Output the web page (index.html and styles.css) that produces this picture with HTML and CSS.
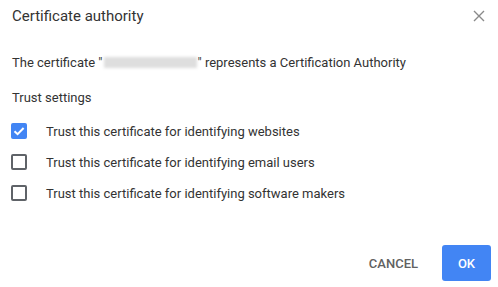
FILE: index.html
```html
<!DOCTYPE html>
<html lang="en">
<head>
    <meta charset="UTF-8">
    <title>Certificate authority</title>
    <link rel="stylesheet" href="styles.css">
</head>
<body>
    <div class="dialog">
        <div class="header">
            <h1 class="title">Certificate authority</h1>
            <button class="close-btn" aria-label="Close">
                <svg width="12" height="12" viewBox="0 0 12 12">
                    <path d="M1 1L11 11M11 1L1 11" stroke="#8a8a8a" stroke-width="1.4" fill="none"/>
                </svg>
            </button>
        </div>

        <p class="message">The certificate "<span class="hidden-name"></span>" represents a Certification Authority</p>

        <div class="section-title">Trust settings</div>

        <div class="options">
            <label class="option">
                <span class="checkbox checked">
                    <svg width="16" height="16" viewBox="0 0 16 16">
                        <path d="M3.5 8.2L6.6 11.2L12.6 5" stroke="#fff" stroke-width="2" fill="none"/>
                    </svg>
                </span>
                <span>Trust this certificate for identifying websites</span>
            </label>
            <label class="option">
                <span class="checkbox"></span>
                <span>Trust this certificate for identifying email users</span>
            </label>
            <label class="option">
                <span class="checkbox"></span>
                <span>Trust this certificate for identifying software makers</span>
            </label>
        </div>

        <div class="actions">
            <button class="btn btn-cancel">Cancel</button>
            <button class="btn btn-ok">OK</button>
        </div>
    </div>
</body>
</html>
```

FILE: styles.css
```css
* {
    margin: 0;
    padding: 0;
    box-sizing: border-box;
}

body {
    background: #fff;
    font-family: Roboto, 'Noto Sans', sans-serif;
    color: #333;
    width: 498px;
    height: 287px;
    overflow: hidden;
}

.dialog {
    padding: 0 7px 0 12px;
}

.header {
    display: flex;
    justify-content: space-between;
    align-items: center;
    height: 32px;
}

.title {
    font-size: 15px;
    font-weight: 400;
    color: #333;
}

.close-btn {
    background: none;
    border: none;
    width: 24px;
    height: 24px;
    display: flex;
    align-items: center;
    justify-content: center;
}

.message {
    font-size: 13px;
    margin-top: 23px;
    line-height: 16px;
}

.hidden-name {
    display: inline-block;
    width: 93px;
    height: 11px;
    vertical-align: -1px;
    background: #dedede;
    filter: blur(1.5px);
    margin: 0 1px;
}

.section-title {
    font-size: 13px;
    line-height: 16px;
    margin-top: 19px;
}

.options {
    display: flex;
    flex-direction: column;
    gap: 15px;
    margin-top: 17px;
}

.option {
    display: flex;
    align-items: center;
    gap: 19px;
    font-size: 13px;
    height: 16px;
}

.checkbox {
    width: 16px;
    height: 16px;
    border: 2px solid #5f6368;
    border-radius: 2px;
    flex-shrink: 0;
    margin-left: -1px;
}

.checkbox.checked {
    background: #4285f4;
    border: none;
}

.checkbox svg {
    display: block;
}

.actions {
    display: flex;
    justify-content: flex-end;
    gap: 8px;
    margin-top: 44px;
}

.btn {
    font-family: Roboto, 'Noto Sans', sans-serif;
    font-size: 13px;
    font-weight: 500;
    text-transform: uppercase;
    height: 36px;
    border: none;
    border-radius: 3px;
    background: none;
}

.btn-cancel {
    color: #616161;
    padding: 0 16px;
}

.btn-ok {
    background: #4285f4;
    color: #fff;
    width: 49px;
}
```
